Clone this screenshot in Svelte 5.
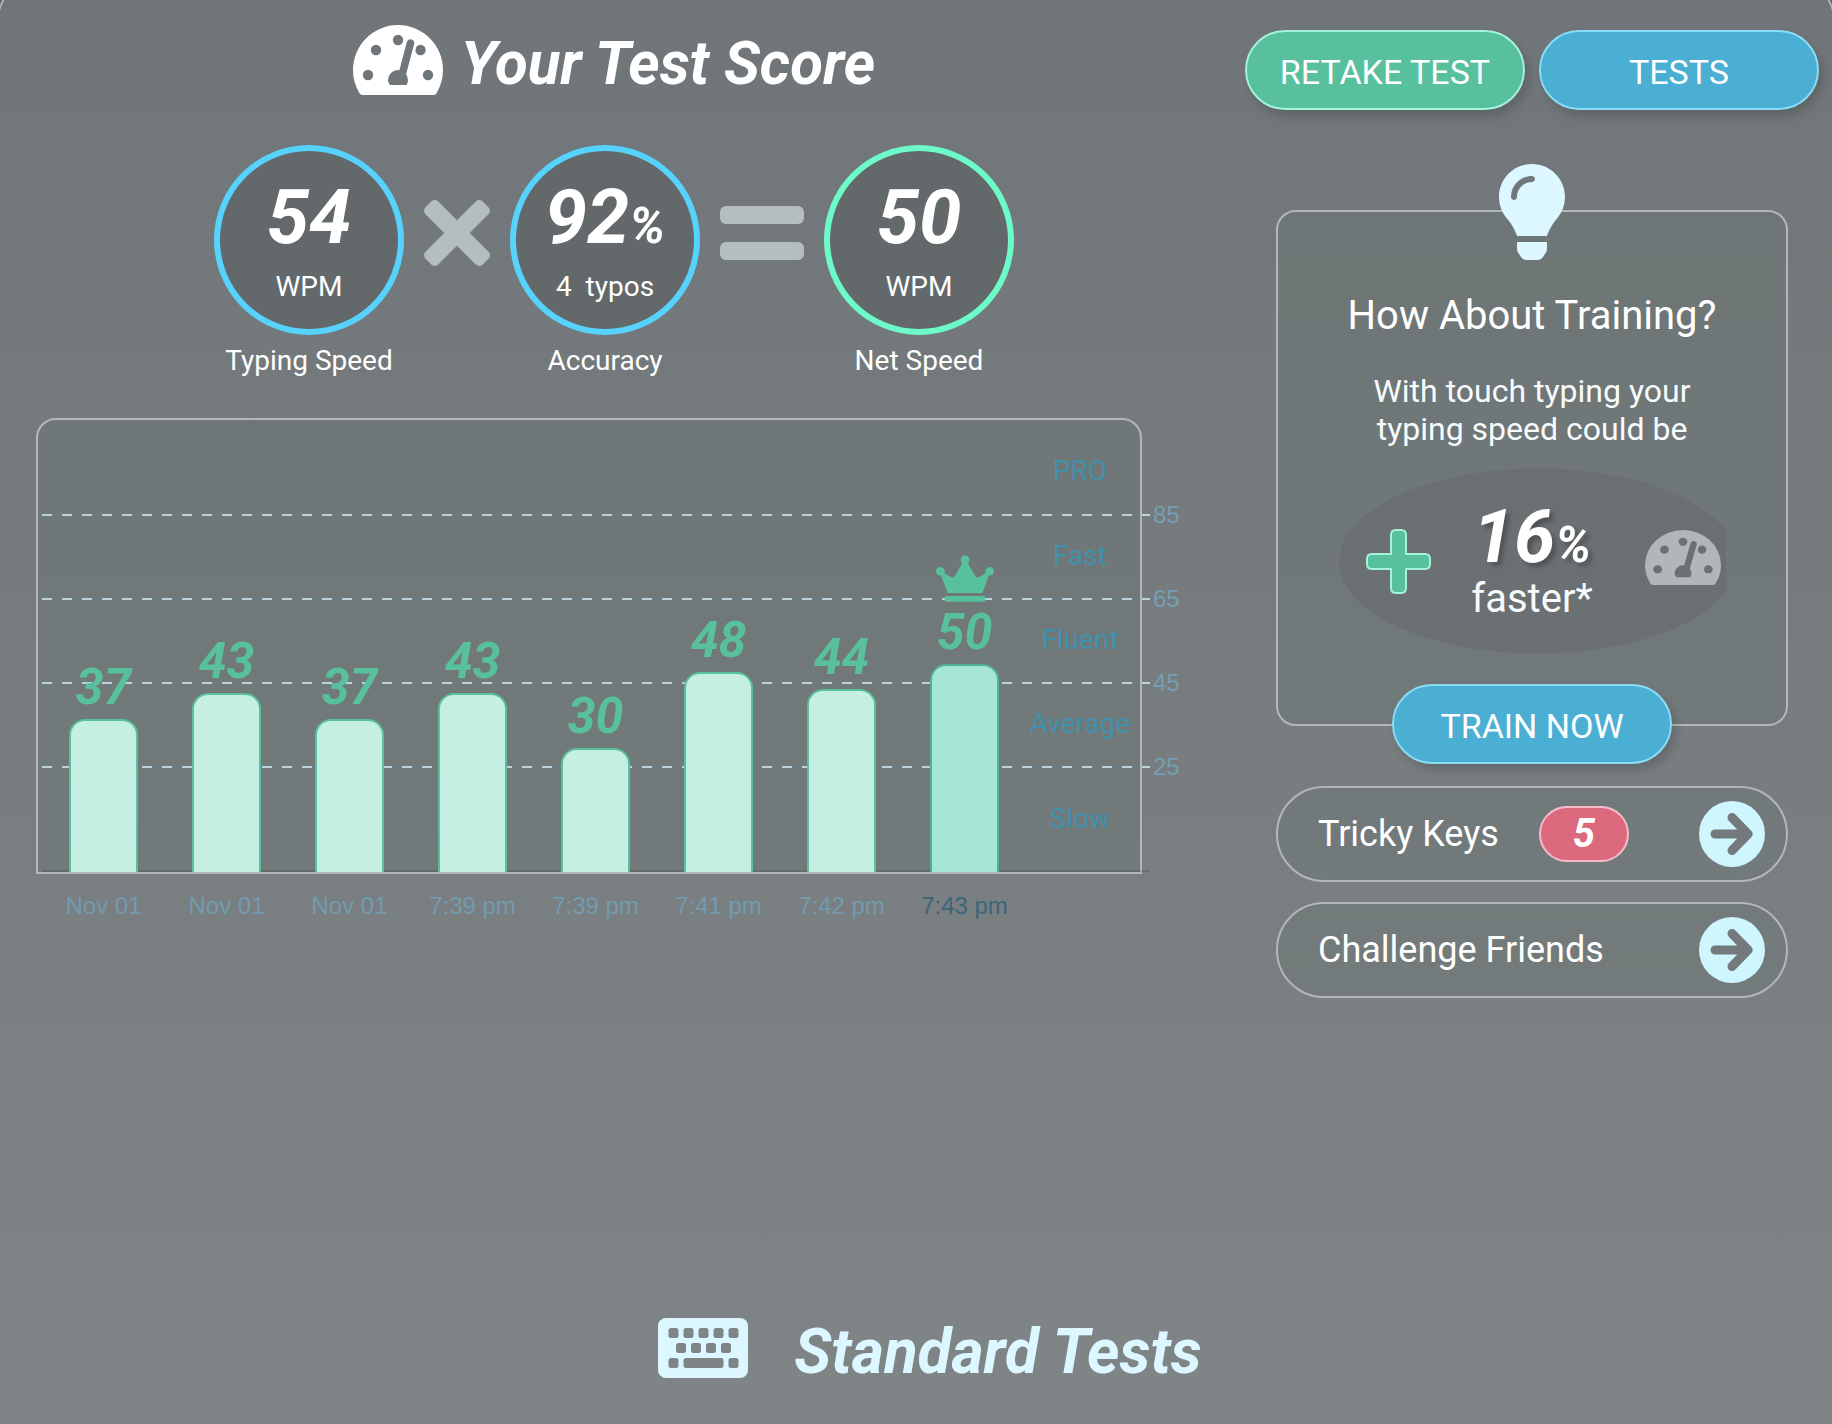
<script lang="ts">
  const results = [
    { value: 37, label: 'Nov 01' },
    { value: 43, label: 'Nov 01' },
    { value: 37, label: 'Nov 01' },
    { value: 43, label: '7:39 pm' },
    { value: 30, label: '7:39 pm' },
    { value: 48, label: '7:41 pm' },
    { value: 44, label: '7:42 pm' },
    { value: 50, label: '7:43 pm', best: true }
  ];

  const levels = ['PRO', 'Fast', 'Fluent', 'Average', 'Slow'];
  const ticks = [85, 65, 45, 25];
  const chartMax = 107.5;

  const pct = (n: number) => (n / chartMax) * 100;
</script>

{#snippet gauge(id: string)}
  <svg class="gauge" viewBox="0 0 90 70" preserveAspectRatio="none" aria-hidden="true">
    <mask {id}>
      <rect width="90" height="70" fill="#fff" />
      <circle cx="23" cy="25" r="5.2" />
      <circle cx="45" cy="15" r="5.2" />
      <circle cx="67.5" cy="25" r="5.2" />
      <circle cx="15" cy="50" r="5.2" />
      <circle cx="75" cy="50" r="5.2" />
      <path d="M49 49 57.5 18" stroke="#fff" stroke-width="13" stroke-linecap="round" />
      <path d="M49 50 57.5 18" stroke="#000" stroke-width="7.5" stroke-linecap="round" />
      <path d="M37 60C35.5 58 35 56.5 35 55a10 10 0 0 1 20 0c0 1.500-.5 3-1.5 5z" />
    </mask>
    <path mask="url(#{id})" fill="currentColor" d="M45 0A45 45 0 0 0 0 45c0 8.5 2.3 16 6.2 22.7C7 69.2 8.5 70 10 70h70c1.5 0 3-.8 3.8-2.3C87.7 61 90 53.5 90 45A45 45 0 0 0 45 0z" />
  </svg>
{/snippet}

{#snippet arrow()}
  <svg class="arrow" viewBox="0 0 66 66" aria-hidden="true">
    <circle cx="33" cy="33" r="33" fill="#cff5ff" />
    <path d="M16 33H47M33 16.5 49 33 33 49.5" fill="none" stroke="#74797b" stroke-width="9" stroke-linecap="round" stroke-linejoin="round" />
  </svg>
{/snippet}

<div class="page">
  <main class="layout">
    <section class="score">
      <div class="heading">
        {@render gauge('gauge-title')}
        <h1>Your Test Score</h1>
      </div>

      <div class="formula">
        <div class="metric">
          <div class="ring">
            <span class="number">54</span>
            <span class="unit">WPM</span>
          </div>
          <span class="caption">Typing Speed</span>
        </div>
        <svg class="operator times" viewBox="0 0 66 66" fill="currentColor" aria-hidden="true">
          <rect x="-7.5" y="24" width="81" height="18" rx="5" transform="rotate(45 33 33)" />
          <rect x="-7.5" y="24" width="81" height="18" rx="5" transform="rotate(-45 33 33)" />
        </svg>
        <div class="metric">
          <div class="ring">
            <span class="number">92<small>%</small></span>
            <span class="unit">4&nbsp; typos</span>
          </div>
          <span class="caption">Accuracy</span>
        </div>
        <svg class="operator equals" viewBox="0 0 84 54" fill="currentColor" aria-hidden="true">
          <rect width="84" height="18" rx="6" />
          <rect y="36" width="84" height="18" rx="6" />
        </svg>
        <div class="metric">
          <div class="ring net">
            <span class="number">50</span>
            <span class="unit">WPM</span>
          </div>
          <span class="caption">Net Speed</span>
        </div>
      </div>

      <div class="chart">
        <div class="plot">
          {#each ticks as tick}
            <div class="gridline" style="bottom: {pct(tick)}%">
              <span>{tick}</span>
            </div>
          {/each}
          <div class="baseline"></div>
          <div class="bars">
            {#each results as r}
              <div class="slot">
                {#if r.best}
                  <svg class="crown" viewBox="0 0 640 512" aria-hidden="true">
                    <path fill="currentColor" d="M528 448H112c-8.8 0-16 7.2-16 16v32c0 8.8 7.2 16 16 16h416c8.8 0 16-7.2 16-16v-32c0-8.8-7.2-16-16-16zm64-320c-26.5 0-48 21.5-48 48 0 7.1 1.6 13.7 4.4 19.8L476 239.2c-15.4 9.2-35.3 4-44.2-11.6L350.3 85C361 76.2 368 63 368 48c0-26.5-21.5-48-48-48s-48 21.5-48 48c0 15 7 28.2 17.7 37l-81.5 142.6c-8.9 15.6-28.9 20.8-44.2 11.6l-72.3-43.4c2.7-6 4.4-12.7 4.4-19.8 0-26.5-21.5-48-48-48S0 149.5 0 176s21.5 48 48 48c2.6 0 5.2-.4 7.7-.8L128 416h384l72.3-192.8c2.5.4 5.1.8 7.7.8 26.5 0 48-21.5 48-48s-21.5-48-48-48z" />
                  </svg>
                {/if}
                <span class="value">{r.value}</span>
                <div class="bar" class:best={r.best} style="height: {pct(r.value - 0.5)}%"></div>
              </div>
            {/each}
          </div>
          <div class="levels">
            {#each levels as level}
              <span>{level}</span>
            {/each}
          </div>
        </div>
        <div class="dates">
          {#each results as r}
            <span class:current={r.best}>{r.label}</span>
          {/each}
        </div>
      </div>
    </section>

    <aside class="side">
      <div class="actions">
        <button class="btn green" type="button">RETAKE TEST</button>
        <button class="btn" type="button">TESTS</button>
      </div>

      <div class="training">
        <svg class="bulb" viewBox="0 0 352 512" aria-hidden="true">
          <path fill="currentColor" d="M96.06 454.35c.01 6.29 1.87 12.45 5.36 17.69l17.09 25.69a31.99 31.99 0 0 0 26.64 14.28h61.71a31.99 31.99 0 0 0 26.64-14.28l17.09-25.69a31.989 31.989 0 0 0 5.36-17.69l.04-38.35H96.01l.05 38.35zM0 176c0 44.37 16.45 84.85 43.56 115.78 16.52 18.85 42.36 58.23 52.21 91.45.04.26.07.52.11.78h160.24c.04-.26.07-.51.11-.78 9.85-33.22 35.69-72.6 52.21-91.45C335.55 260.85 352 220.37 352 176 352 78.61 272.91-.3 175.45 0 73.44.31 0 82.97 0 176zm176-80c-44.11 0-80 35.89-80 80 0 8.84-7.16 16-16 16s-16-7.16-16-16c0-61.76 50.24-112 112-112 8.84 0 16 7.16 16 16s-7.16 16-16 16z" />
        </svg>
        <h2>How About Training?</h2>
        <p>With touch typing your<br />typing speed could be</p>
        <div class="gain">
          <svg class="plus" viewBox="0 0 65 65" aria-hidden="true">
            <path d="M30 1h5q5 0 5 5v19h19q5 0 5 5v5q0 5-5 5H40v19q0 5-5 5h-5q-5 0-5-5V40H6q-5 0-5-5v-5q0-5 5-5h19V6q0-5 5-5z" fill="#58c09d" stroke="#a5f2db" stroke-width="2" />
          </svg>
          <div class="gain-text">
            <span class="number">16<small>%</small></span>
            <span class="faster">faster*</span>
          </div>
          {@render gauge('gauge-gain')}
        </div>
        <button class="btn train" type="button">TRAIN NOW</button>
      </div>

      <nav class="links">
        <a href="#tricky-keys">Tricky Keys <b>5</b>{@render arrow()}</a>
        <a href="#challenge">Challenge Friends{@render arrow()}</a>
      </nav>
    </aside>
  </main>

  <div class="heading standard">
    <svg class="keyboard" viewBox="0 0 90 60" aria-hidden="true">
      <rect width="90" height="60" rx="8" fill="currentColor" />
      <g fill="#7f8486">
        {#each [10.5, 25.5, 40.5, 55.5, 70.5] as x}
          <rect {x} y="10" width="10" height="10" rx="2.5" />
        {/each}
        {#each [18, 33, 48, 63] as x}
          <rect {x} y="25" width="10" height="10" rx="2.5" />
        {/each}
        <rect x="10.5" y="40" width="10" height="10" rx="2.5" />
        <rect x="25.5" y="40" width="40" height="10" rx="2.5" />
        <rect x="70.5" y="40" width="10" height="10" rx="2.5" />
      </g>
    </svg>
    <h2>Standard Tests</h2>
  </div>
</div>

<style>
  :global(body) {
    margin: 0;
    background: #5c6264;
    font-family: Roboto, sans-serif;
  }

  .page {
    position: relative;
    min-height: 100vh;
    box-sizing: border-box;
    padding-bottom: 40px;
    color: #fff;
    overflow: hidden;
    isolation: isolate;
  }

  /* rounded sheet that runs off every edge of the window */
  .page::before {
    content: '';
    position: absolute;
    z-index: -1;
    inset: -20px -3px -60px;
    border: 2px solid #aaafb1;
    border-radius: 40px 40px 0 0;
    background: linear-gradient(#6f7578, #808587);
  }

  .layout {
    display: grid;
    grid-template-columns: minmax(0, 1fr) 600px;
    gap: 4px;
  }

  .heading {
    display: flex;
    justify-content: center;
    align-items: center;
    gap: 18px;
    height: 72px;
  }

  .heading h1,
  .heading h2 {
    margin: 0;
    padding-top: 8px;
    font-size: 60px;
    line-height: 64px;
    font-weight: 700;
    font-style: italic;
  }

  .heading h2 {
    font-size: 62px;
  }

  .gauge {
    width: 90px;
    height: 70px;
  }

  .score {
    padding-top: 24px;
  }

  .formula {
    display: flex;
    justify-content: center;
    align-items: flex-start;
    gap: 20px;
    margin-top: 49px;
  }

  .metric {
    display: flex;
    flex-direction: column;
    align-items: center;
    gap: 10px;
    width: 190px;
  }

  .ring {
    box-sizing: border-box;
    width: 190px;
    height: 190px;
    padding-top: 26px;
    border: 6px solid #56d2fc;
    border-radius: 50%;
    background: #63686b;
    text-align: center;
  }

  .ring.net {
    border-color: #6cfbc8;
  }

  .number {
    display: block;
    font-size: 76px;
    line-height: 80px;
    font-weight: 700;
    font-style: italic;
  }

  .number small {
    font-size: 50px;
    line-height: 50px;
  }

  .unit {
    display: block;
    margin-top: 14px;
  }

  .unit,
  .caption {
    font-size: 28px;
    line-height: 32px;
    white-space: nowrap;
  }

  .operator {
    height: 176px;
    color: #b4bdc0;
  }

  .times {
    width: 66px;
  }

  .equals {
    width: 84px;
  }

  .chart {
    margin: 41px 86px 0 36px;
  }

  .plot {
    position: relative;
    display: flex;
    height: 452px;
    border: 2px solid #b3b7b9;
    border-radius: 20px 20px 0 0;
    background: rgba(105, 114, 112, 0.4);
  }

  .gridline {
    position: absolute;
    left: 4px;
    right: -10px;
    height: 2px;
    margin-bottom: -1px;
    background: repeating-linear-gradient(90deg, #bad4df 0 10px, transparent 10px 20px);
  }

  .gridline span {
    position: absolute;
    left: 100%;
    top: -13px;
    padding-left: 3px;
    font: 24px/28px 'Liberation Sans', sans-serif;
    color: #759eb3;
  }

  .baseline {
    position: absolute;
    left: 4px;
    right: -10px;
    bottom: 0;
    height: 2px;
    background: rgba(0, 0, 0, 0.12);
  }

  .bars {
    position: relative;
    flex: 1;
    display: grid;
    grid-template-columns: repeat(8, 1fr);
    padding-left: 4px;
  }

  .slot {
    display: flex;
    flex-direction: column;
    justify-content: flex-end;
    align-items: center;
    height: 452px;
    color: #58c09d;
  }

  .crown {
    width: 58px;
    height: 47px;
  }

  .value {
    padding-bottom: 2px;
    font-size: 50px;
    line-height: 60px;
    font-weight: 700;
    font-style: italic;
  }

  .bar {
    box-sizing: border-box;
    width: 69px;
    border: 2px solid #58c09d;
    border-bottom: none;
    border-radius: 16px 16px 0 0;
    background: #c5efe3;
  }

  .bar.best {
    background: #a5e6d6;
    border-color: #50b08f;
  }

  .levels {
    position: relative;
    display: grid;
    grid-template-rows: 86fr 84fr 84fr 84fr 106fr;
    align-items: center;
    justify-items: center;
    box-sizing: border-box;
    width: 114px;
    padding: 8px 6px 0 0;
    font-size: 28px;
    line-height: 32px;
    color: #4091ac;
  }

  .dates {
    display: grid;
    grid-template-columns: repeat(8, 1fr);
    margin-top: 18px;
    padding: 0 116px 0 6px;
    font: 24px/28px 'Liberation Sans', sans-serif;
    text-align: center;
    color: #729bb0;
  }

  .dates .current {
    color: #3c657b;
  }

  .side {
    padding-top: 30px;
  }

  .actions {
    display: flex;
    justify-content: center;
    gap: 14px;
  }

  .btn {
    width: 280px;
    height: 80px;
    padding: 4px 0 0;
    border: 2px solid #8adcf6;
    border-radius: 40px;
    background: #4baed3;
    box-shadow: 4px 6px 10px rgba(0, 0, 0, 0.16);
    color: #fff;
    font: 34px/40px Roboto, sans-serif;
    cursor: pointer;
  }

  .btn.green {
    background: #58c09d;
    border-color: #a5f2db;
  }

  .training {
    position: relative;
    margin: 100px 44px 0;
    padding: 80px 60px 0;
    border: 2px solid #b3b7b9;
    border-radius: 20px;
    background: rgba(105, 114, 112, 0.4);
    text-align: center;
  }

  .bulb {
    position: absolute;
    top: -48px;
    left: calc(50% - 33px);
    width: 66px;
    height: 96px;
    color: #dcf7ff;
  }

  .training h2 {
    margin: 0;
    font-size: 40px;
    line-height: 48px;
    font-weight: 400;
  }

  .training p {
    margin: 32px 0 20px;
    font-size: 32px;
    line-height: 38px;
    color: #f7fbfd;
  }

  .gain {
    display: grid;
    grid-template-columns: 120px 1fr 120px;
    align-items: center;
    justify-items: center;
    height: 186px;
    background: radial-gradient(200px 93px at 200px 93px, rgba(101, 104, 107, 0.5) 99%, transparent 100%);
  }

  .plus {
    width: 65px;
    height: 65px;
  }

  .gain-text .number {
    font-size: 74px;
    line-height: 76px;
    text-shadow: 4px 4px 4px rgba(0, 0, 0, 0.25);
  }

  .faster {
    display: block;
    font-size: 40px;
    line-height: 48px;
    color: #f7fbfd;
  }

  .gain .gauge {
    justify-self: end;
    width: 76px;
    height: 55px;
    padding: 0 5px 8px 0;
    color: #b3b6b8;
  }

  .btn.train {
    display: block;
    margin: 30px auto -40px;
  }

  .links {
    display: grid;
    gap: 20px;
    margin: 60px 44px 0;
  }

  .links a {
    display: flex;
    align-items: center;
    box-sizing: border-box;
    height: 96px;
    padding: 0 21px 0 40px;
    border: 2px solid #b3b7b9;
    border-radius: 48px;
    background: rgba(105, 114, 112, 0.4);
    color: #fff;
    font-size: 36px;
    line-height: 40px;
    text-decoration: none;
  }

  .links b {
    box-sizing: border-box;
    width: 90px;
    height: 56px;
    margin-left: 40px;
    border: 2px solid #f3bcc8;
    border-radius: 28px;
    background: #dc697e;
    font-size: 40px;
    line-height: 52px;
    font-style: italic;
    text-align: center;
  }

  .arrow {
    width: 66px;
    height: 66px;
    margin-left: auto;
  }

  .standard {
    gap: 46px;
    margin-top: 314px;
    padding-left: 28px;
    color: #dcf7ff;
  }

  .keyboard {
    width: 90px;
    height: 60px;
  }
</style>
